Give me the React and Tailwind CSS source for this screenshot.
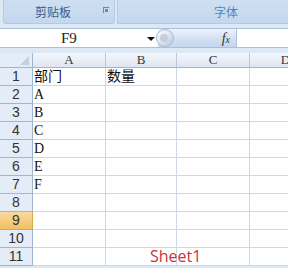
import React from 'react';

const cols = [
    { name: 'A', w: 'w-[73px]' },
    { name: 'B', w: 'w-[71px]' },
    { name: 'C', w: 'w-[73px]' },
    { name: 'D', w: 'w-[72px]' },
];

const data = [
    ['部门', '数量'],
    ['A', ''],
    ['B', ''],
    ['C', ''],
    ['D', ''],
    ['E', ''],
    ['F', ''],
    ['', ''],
    ['', ''],
    ['', ''],
    ['', ''],
];

const cellFont = { fontFamily: '"Liberation Serif", "Noto Sans CJK SC", serif' };

export default function App() {
    return (
        <div className="relative w-[288px] h-[268px] overflow-hidden bg-[#dde8f5]" style={{ fontFamily: '"Liberation Sans", "Noto Sans CJK SC", sans-serif' }}>
            {/* ribbon groups */}
            <div className="flex h-[24px] pl-[3px] gap-[2px]">
                <div className="relative w-[112px] shrink-0 h-full rounded-b-[3px] border border-t-0 border-[#b3c9e4] bg-gradient-to-b from-[#cfdff2] to-[#c3d7ef] flex items-center justify-center">
                    <span className="text-[12px] text-[#3b5a88] -ml-[12px]" style={{ fontFamily: '"Noto Sans CJK SC", sans-serif' }}>剪贴板</span>
                    <span className="absolute left-[99px] top-[7px] w-[6px] h-[6px] border-l border-t border-[#6d87ab]">
                        <span className="absolute left-[1px] top-[1px] w-[3px] h-[3px] bg-[#6d87ab]" />
                    </span>
                </div>
                <div className="flex-1 h-full border-l border-b border-[#b3c9e4] bg-gradient-to-b from-[#cfdff2] to-[#c3d7ef] flex items-center pl-[96px]">
                    <span className="text-[12px] text-[#4a86c3]" style={{ fontFamily: '"Noto Sans CJK SC", sans-serif' }}>字体</span>
                </div>
            </div>

            {/* formula bar */}
            <div className="mt-[4px] flex h-[20px]">
                <div className="relative w-[158px] shrink-0 h-full bg-white border-y border-[#a9c1dd] flex items-center">
                    <span className="ml-[61px] text-[15px] text-[#222]" style={cellFont}>F9</span>
                    <span className="absolute left-[147px] top-[8px] w-0 h-0 border-x-[4px] border-x-transparent border-t-[4px] border-t-[#111]" />
                </div>
                <div className="relative w-[78px] shrink-0 h-full bg-gradient-to-b from-[#eef3fa] via-[#d4e2f3] to-[#c4d6ee] border-y border-[#a9c1dd] flex items-center">
                    <span className="absolute -left-[2px] top-[0px] w-[18px] h-[18px] rounded-full border border-[#a6b9d2] bg-gradient-to-br from-[#ffffff] via-[#dfe6ef] to-[#b9c6d6]" />
                    <span className="absolute left-[2px] top-[5px] w-[8px] h-[8px] rounded-full bg-[#c5ceda]" />
                    <span className="ml-auto mr-[6px] text-[14px] italic text-[#333]" style={{ fontFamily: '"Liberation Serif", serif' }}>f<span className="text-[10px]">x</span></span>
                </div>
                <div className="flex-1 h-full bg-white border border-r-0 border-[#a9c1dd]" />
            </div>

            {/* sheet */}
            <div className="mt-[5px] bg-white">
                <div className="flex h-[15px] border-b border-[#9eb6ce]">
                    <div className="relative w-[33px] shrink-0 h-full bg-[#e4ecf7] border-r border-[#9eb6ce]">
                        <span className="absolute right-[3px] bottom-[2px] w-0 h-0 border-l-[9px] border-l-transparent border-b-[9px] border-b-[#c3cfdf]" />
                    </div>
                    {cols.map(c => (
                        <div key={c.name} className={`${c.w} shrink-0 h-full bg-gradient-to-b from-[#f4f7fc] to-[#dde6f2] border-r border-[#b8c9db] flex items-center justify-center text-[13px] text-[#333]`} style={cellFont}>
                            {c.name}
                        </div>
                    ))}
                </div>
                {data.map((row, i) => (
                    <div key={i} className="flex h-[18px]">
                        <div className={`w-[33px] shrink-0 h-full border-r border-b flex items-center justify-center text-[14px] ${i === 8 ? 'bg-gradient-to-b from-[#f9d99f] to-[#f1c15f] border-[#d9a74a] text-[#333]' : 'bg-[#e4ecf7] border-[#9eb6ce] text-[#333]'}`}>
                            {i + 1}
                        </div>
                        <div className="w-[73px] shrink-0 h-full border-r border-b border-[#d0d7e5] flex items-center pl-[1px] text-[14px] text-[#111]" style={cellFont}>
                            {row[0]}
                        </div>
                        <div className="w-[71px] shrink-0 h-full border-r border-b border-[#d0d7e5] flex items-center pl-[1px] text-[14px] text-[#111]" style={cellFont}>
                            {row[1]}
                        </div>
                        <div className="w-[73px] shrink-0 h-full border-r border-b border-[#d0d7e5]" />
                        <div className="w-[72px] shrink-0 h-full border-r border-b border-[#d0d7e5]" />
                    </div>
                ))}
            </div>

            {/* annotation */}
            <span className="absolute left-[150px] top-[244px] text-[16px] text-[#c8323c]" style={{ fontFamily: '"Open Sans", "Liberation Sans", sans-serif' }}>Sheet1</span>
        </div>
    );
}
